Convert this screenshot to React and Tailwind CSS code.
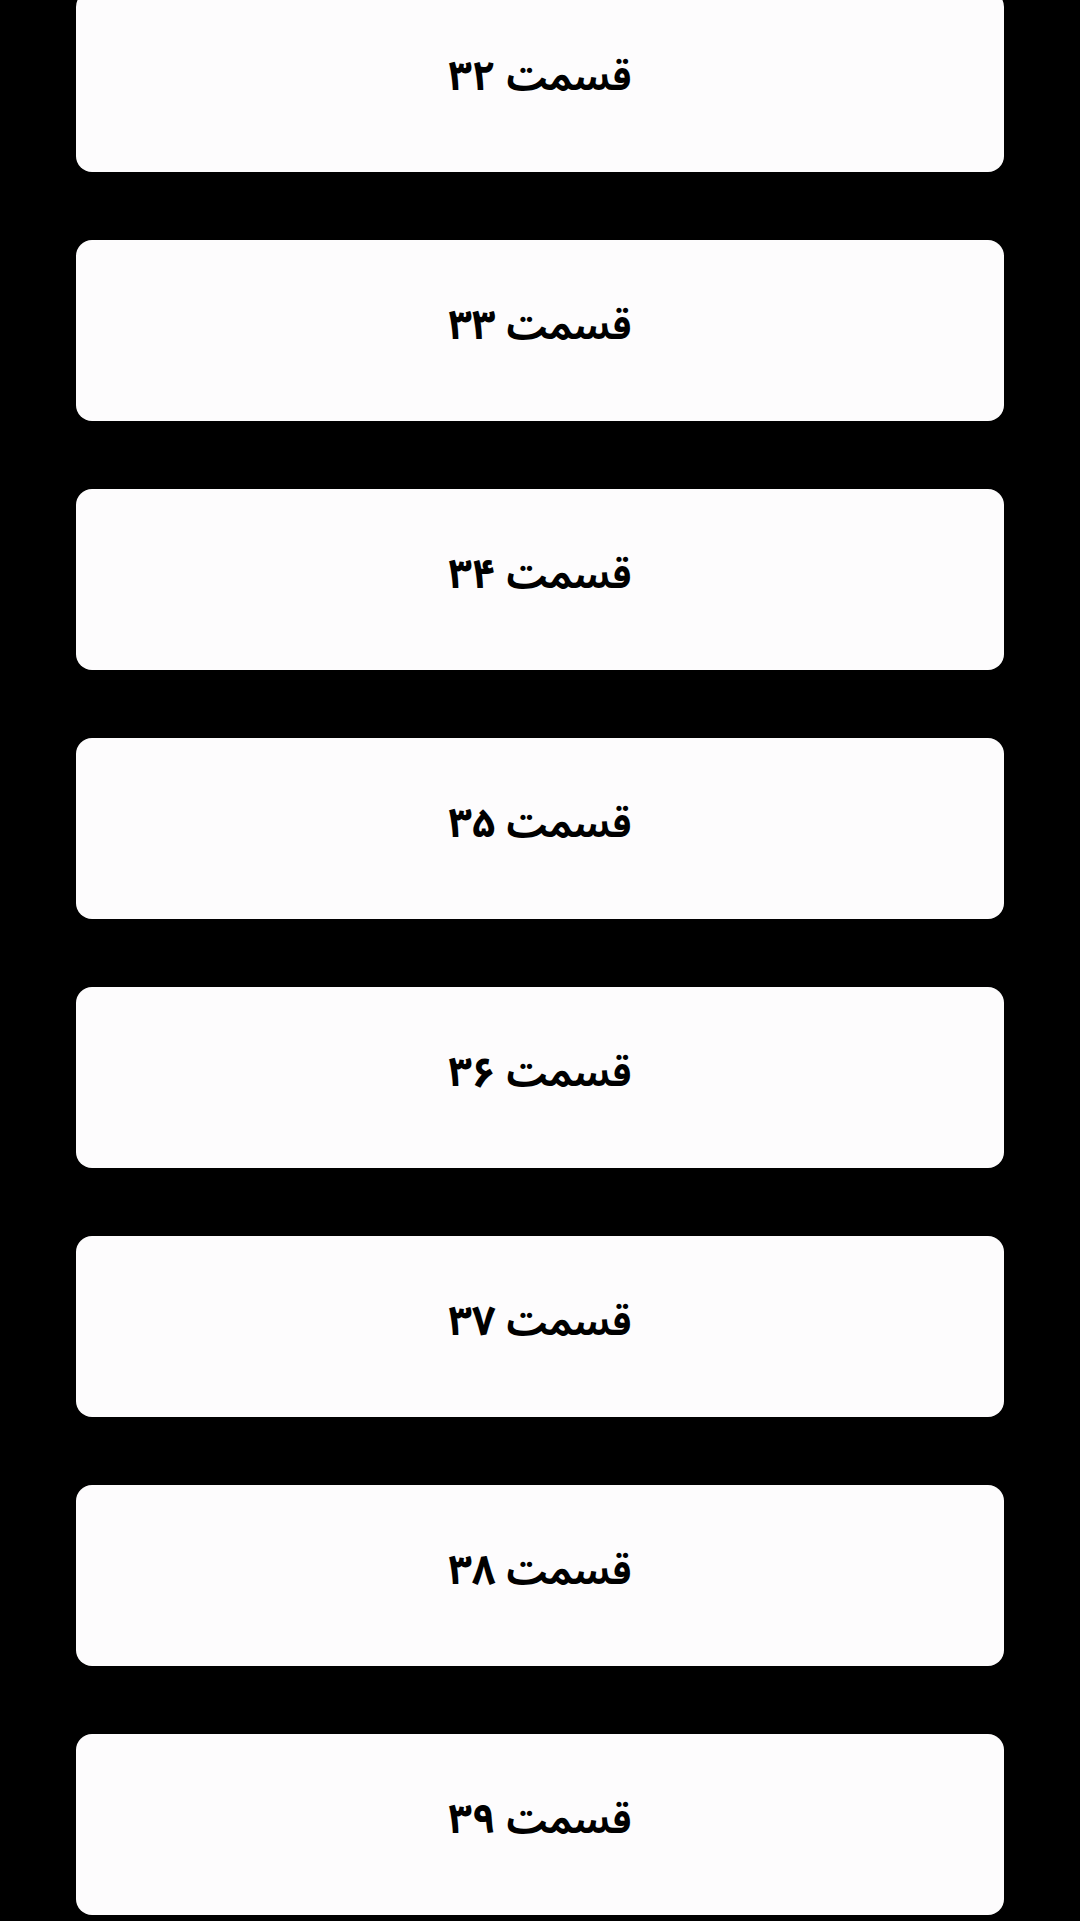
import React from 'react';

const EPISODES = ['۳۲', '۳۳', '۳۴', '۳۵', '۳۶', '۳۷', '۳۸', '۳۹'];

export default function App() {
  return (
    <div dir="rtl" className="min-h-[1921px] w-full overflow-hidden bg-black">
      <div className="-mt-[9px] flex flex-col gap-[68px] px-[76px]">
        {EPISODES.map((n) => (
          <button
            key={n}
            className="flex h-[181px] w-full items-center justify-center gap-[11px] rounded-2xl bg-[#fdfcfd] pb-[8px] text-[38px] leading-none font-bold text-black"
            style={{ fontFamily: '"Noto Sans Arabic", "DejaVu Sans", sans-serif' }}
          >
            <span>قسمت</span>
            <span className="text-[41px]">{n}</span>
          </button>
        ))}
      </div>
    </div>
  );
}
